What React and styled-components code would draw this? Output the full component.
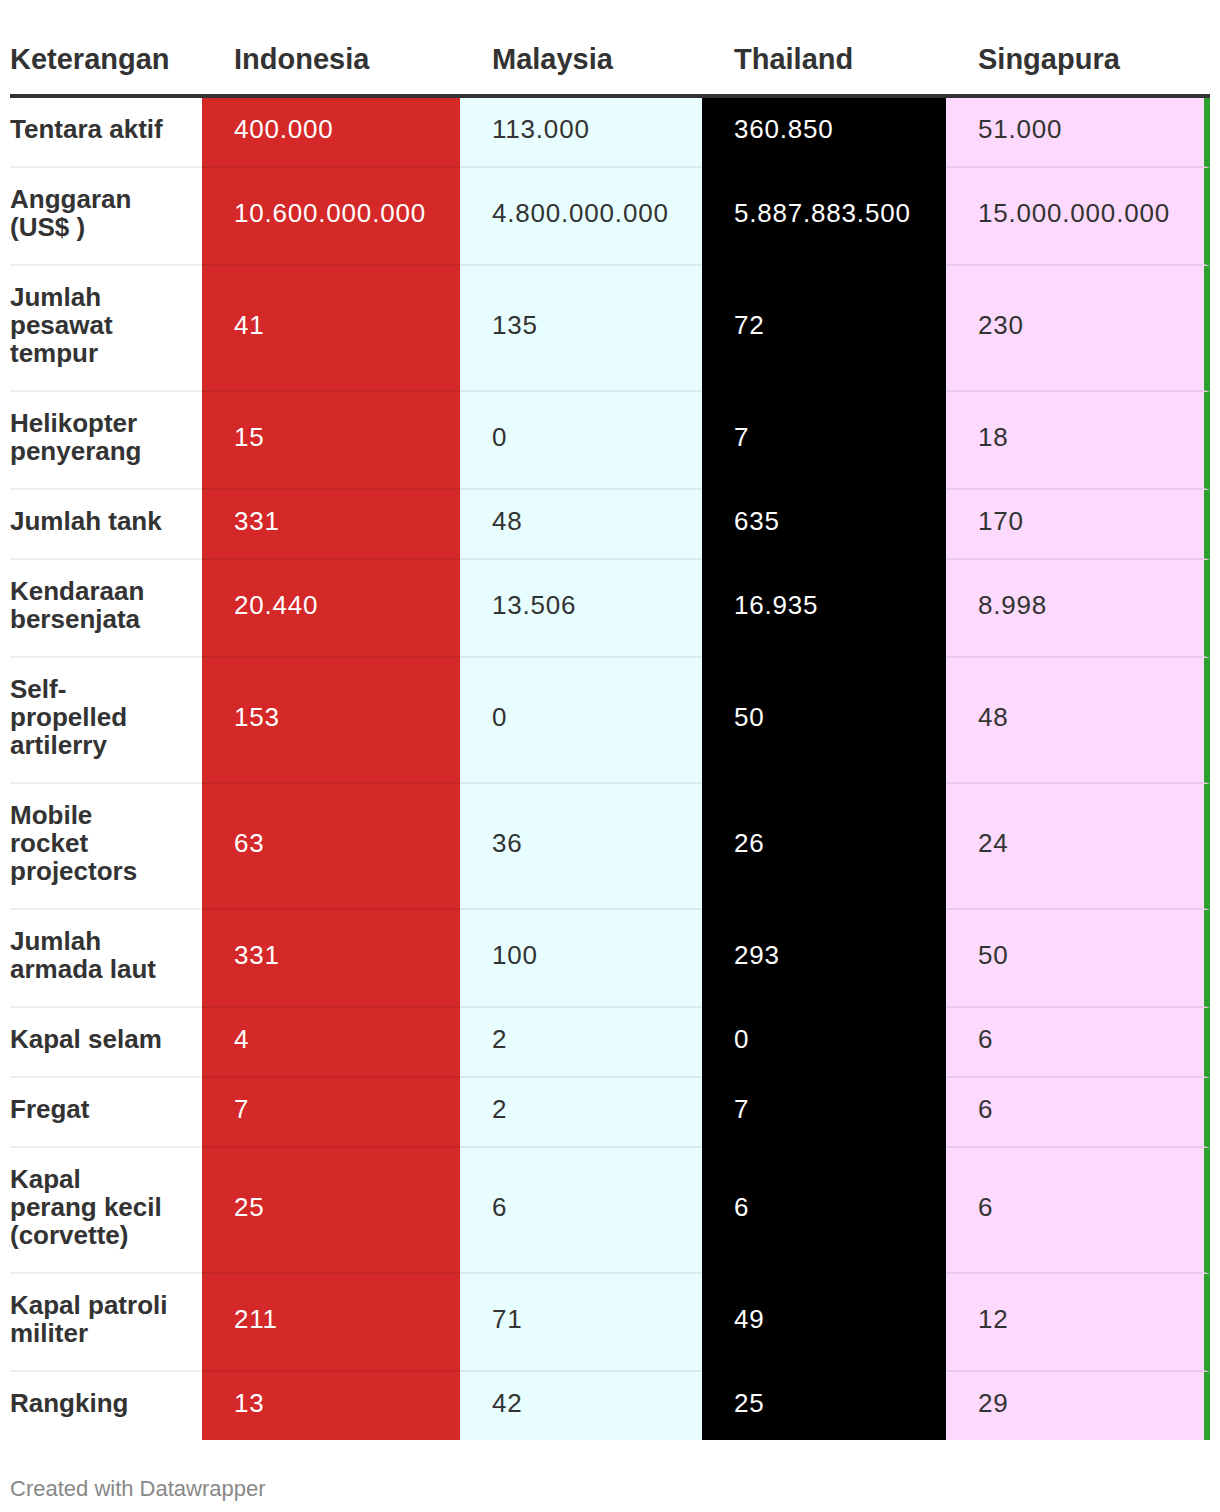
import React from "react";
import styled, { createGlobalStyle } from "styled-components";

const Global = createGlobalStyle`
  html, body { margin: 0; padding: 0; background: #fff; }
  body { font-family: "Liberation Sans", Arial, Helvetica, sans-serif; color: #333; }
`;

const Page = styled.div`
  padding: 10px;
  width: 1200px;
`;

const Table = styled.table`
  width: 1200px;
  table-layout: fixed;
  border-collapse: separate;
  border-spacing: 0;
`;

const HeadCell = styled.th`
  text-align: left;
  font-weight: 700;
  font-size: 29px;
  line-height: 32px;
  color: #333;
  padding: 33px 0 19px ${(p) => (p.$first ? "0" : "32px")};
  border-bottom: 4px solid #333;
  white-space: nowrap;
`;

const LabelCell = styled.td`
  font-weight: 700;
  font-size: 26px;
  line-height: 28px;
  color: #333;
  padding: 17px 8px 23px 0;
  vertical-align: middle;
  border-bottom: ${(p) => (p.$last ? "none" : "2px solid rgba(0,0,0,0.07)")};
`;

const ValueCell = styled.td`
  font-size: 26px;
  line-height: 28px;
  letter-spacing: 0.8px;
  padding: 17px 0 23px 32px;
  vertical-align: middle;
  white-space: nowrap;
  background: ${(p) => p.$bg};
  color: ${(p) => p.$fg};
  border-bottom: ${(p) => (p.$last ? "none" : "2px solid rgba(0,0,0,0.07)")};
  border-right: ${(p) => (p.$edge ? `6px solid ${p.$edge}` : "none")};
`;

const Footer = styled.div`
  margin-top: 36px;
  font-size: 22px;
  line-height: 25px;
  color: #888;
`;

const columns = [
  { name: "Indonesia", bg: "#d52828", fg: "#ffffff", width: 258 },
  { name: "Malaysia", bg: "#e8fdfd", fg: "#333333", width: 242 },
  { name: "Thailand", bg: "#000000", fg: "#ffffff", width: 244 },
  { name: "Singapura", bg: "#fdd9fd", fg: "#333333", edge: "#2ca02c", width: 264 },
];

const rows = [
  [["Tentara aktif"], ["400.000", "113.000", "360.850", "51.000"]],
  [["Anggaran", "(US$ )"], ["10.600.000.000", "4.800.000.000", "5.887.883.500", "15.000.000.000"]],
  [["Jumlah", "pesawat", "tempur"], ["41", "135", "72", "230"]],
  [["Helikopter", "penyerang"], ["15", "0", "7", "18"]],
  [["Jumlah tank"], ["331", "48", "635", "170"]],
  [["Kendaraan", "bersenjata"], ["20.440", "13.506", "16.935", "8.998"]],
  [["Self-", "propelled", "artilerry"], ["153", "0", "50", "48"]],
  [["Mobile", "rocket", "projectors"], ["63", "36", "26", "24"]],
  [["Jumlah", "armada laut"], ["331", "100", "293", "50"]],
  [["Kapal selam"], ["4", "2", "0", "6"]],
  [["Fregat"], ["7", "2", "7", "6"]],
  [["Kapal", "perang kecil", "(corvette)"], ["25", "6", "6", "6"]],
  [["Kapal patroli", "militer"], ["211", "71", "49", "12"]],
  [["Rangking"], ["13", "42", "25", "29"]],
];

export default function App() {
  return (
    <Page>
      <Global />
      <Table>
        <colgroup>
          <col style={{ width: 192 }} />
          {columns.map((c) => (
            <col key={c.name} style={{ width: c.width }} />
          ))}
        </colgroup>
        <thead>
          <tr>
            <HeadCell $first>Keterangan</HeadCell>
            {columns.map((c) => (
              <HeadCell key={c.name}>{c.name}</HeadCell>
            ))}
          </tr>
        </thead>
        <tbody>
          {rows.map(([label, values], i) => {
            const last = i === rows.length - 1;
            return (
              <tr key={i}>
                <LabelCell $last={last}>
                  {label.map((l, j) => (
                    <React.Fragment key={j}>
                      {j > 0 && <br />}
                      {l}
                    </React.Fragment>
                  ))}
                </LabelCell>
                {values.map((v, j) => (
                  <ValueCell
                    key={j}
                    $bg={columns[j].bg}
                    $fg={columns[j].fg}
                    $edge={columns[j].edge}
                    $last={last}
                  >
                    {v}
                  </ValueCell>
                ))}
              </tr>
            );
          })}
        </tbody>
      </Table>
      <Footer>Created with Datawrapper</Footer>
    </Page>
  );
}
